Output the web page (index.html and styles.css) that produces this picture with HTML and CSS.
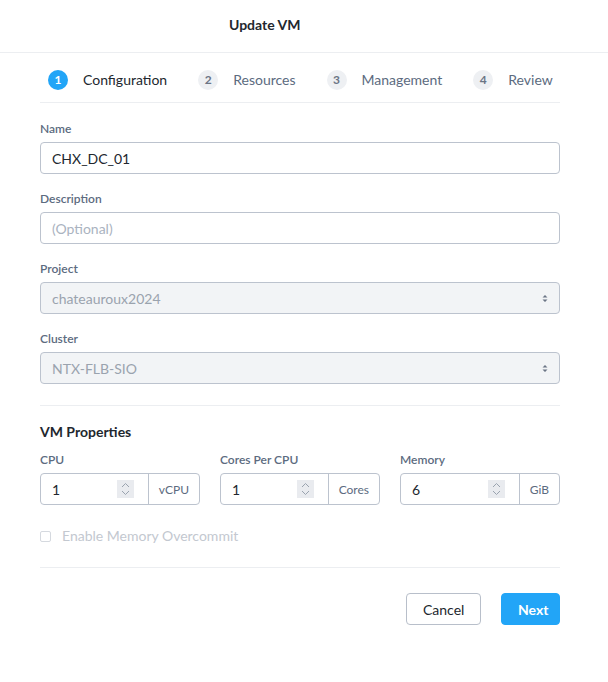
FILE: index.html
```html
<!DOCTYPE html>
<html>
<head>
<meta charset="utf-8">
<link rel="stylesheet" href="styles.css">
</head>
<body>
<div class="modal">
  <div class="header"><span class="title">Update VM</span></div>
  <div class="content">
    <div class="steps">
      <div class="step active"><span class="num">1</span><span class="slabel">Configuration</span></div>
      <div class="step"><span class="num">2</span><span class="slabel">Resources</span></div>
      <div class="step"><span class="num">3</span><span class="slabel">Management</span></div>
      <div class="step"><span class="num">4</span><span class="slabel">Review</span></div>
    </div>
    <div class="form">
      <div class="field">
        <div class="label">Name</div>
        <div class="input"><span class="val">CHX_DC_01</span></div>
      </div>
      <div class="field">
        <div class="label">Description</div>
        <div class="input"><span class="ph">(Optional)</span></div>
      </div>
      <div class="field">
        <div class="label">Project</div>
        <div class="input select"><span class="dis">chateauroux2024</span>
          <svg class="caret" width="6" height="9" viewBox="0 0 6 9"><path d="M0.5 3.5L3 1L5.5 3.5Z M0.5 5.5L3 8L5.5 5.5Z" fill="#6b7585"/></svg>
        </div>
      </div>
      <div class="field">
        <div class="label">Cluster</div>
        <div class="input select"><span class="dis">NTX-FLB-SIO</span>
          <svg class="caret" width="6" height="9" viewBox="0 0 6 9"><path d="M0.5 3.5L3 1L5.5 3.5Z M0.5 5.5L3 8L5.5 5.5Z" fill="#6b7585"/></svg>
        </div>
      </div>
    </div>
    <div class="section">
      <div class="stitle">VM Properties</div>
      <div class="grid">
        <div class="col">
          <div class="label">CPU</div>
          <div class="group">
            <div class="num-in"><span class="val">1</span>
              <span class="spin"><svg width="9" height="16" viewBox="0 0 9 16"><path d="M1 6L4.5 2.5L8 6M1 10L4.5 13.5L8 10" fill="none" stroke="#9aa3af" stroke-width="1"/></svg></span>
            </div>
            <div class="addon">vCPU</div>
          </div>
        </div>
        <div class="col">
          <div class="label">Cores Per CPU</div>
          <div class="group">
            <div class="num-in"><span class="val">1</span>
              <span class="spin"><svg width="9" height="16" viewBox="0 0 9 16"><path d="M1 6L4.5 2.5L8 6M1 10L4.5 13.5L8 10" fill="none" stroke="#9aa3af" stroke-width="1"/></svg></span>
            </div>
            <div class="addon">Cores</div>
          </div>
        </div>
        <div class="col">
          <div class="label">Memory</div>
          <div class="group">
            <div class="num-in"><span class="val">6</span>
              <span class="spin"><svg width="9" height="16" viewBox="0 0 9 16"><path d="M1 6L4.5 2.5L8 6M1 10L4.5 13.5L8 10" fill="none" stroke="#9aa3af" stroke-width="1"/></svg></span>
            </div>
            <div class="addon">GiB</div>
          </div>
        </div>
      </div>
      <div class="check"><span class="box"></span><span>Enable Memory Overcommit</span></div>
    </div>
    <div class="footer">
      <button class="btn cancel">Cancel</button>
      <button class="btn next">Next</button>
    </div>
  </div>
</div>
</body>
</html>
```
FILE: styles.css
```css
* { box-sizing: border-box; }
body {
  margin: 0;
  background: #fff;
  font-family: "Lato", "Open Sans", sans-serif;
  color: #22272e;
}
.modal { width: 608px; height: 682px; }
.header {
  height: 53px;
  border-bottom: 1px solid #eceef1;
  padding-left: 229px;
  display: flex;
  align-items: center;
}
.title { font-size: 14px; font-weight: 700; color: #22272e; margin-top: -4px; }
.content { padding: 0 48px 0 40px; }
.steps {
  height: 50px;
  border-bottom: 1px solid #eceef1;
  display: flex;
  align-items: center;
  gap: 31px;
  padding-left: 8px;
  padding-top: 4px;
}
.step { display: flex; align-items: center; gap: 15px; }
.num {
  width: 20px; height: 20px; border-radius: 50%;
  background: #eef0f3; color: #6b7585;
  font-size: 12px; font-weight: 700;
  display: flex; align-items: center; justify-content: center;
}
.slabel { font-size: 14px; color: #5c6b80; }
.step.active .num { background: #22a5f7; color: #fff; }
.step.active .slabel { color: #22272e; }
.form { padding-top: 18px; padding-bottom: 21px; border-bottom: 1px solid #eceef1; }
.field + .field { margin-top: 17px; }
.label { font-size: 12px; font-weight: 600; color: #5c6b80; line-height: 16px; margin-bottom: 5px; }
.input {
  height: 32px;
  border: 1px solid #bcc3ce;
  border-radius: 4px;
  padding: 0 11px;
  display: flex; align-items: center;
  font-size: 14px;
}
.val { color: #22272e; }
.ph { color: #aab3bf; }
.dis { color: #9aa3ae; }
.select { background: #f2f4f6; justify-content: space-between; }
.section { padding-top: 17px; padding-bottom: 22px; border-bottom: 1px solid #eceef1; }
.stitle { font-size: 14px; font-weight: 700; line-height: 18px; margin-bottom: 11px; }
.grid { display: grid; grid-template-columns: repeat(3, 160px); gap: 20px; }
.group {
  height: 32px; display: flex;
  border: 1px solid #bcc3ce; border-radius: 4px;
}
.num-in {
  flex: 1; display: flex; align-items: center; justify-content: space-between;
  padding: 0 14px 0 11px; font-size: 14px;
}
.spin {
  width: 17px; height: 18px; background: #e9ebef;
  display: flex; align-items: center; justify-content: center;
}
.addon {
  border-left: 1px solid #bcc3ce;
  padding: 0 10px;
  display: flex; align-items: center;
  font-size: 12px; color: #5c6b80;
}
.check {
  margin-top: 22px; display: flex; align-items: center; gap: 11px;
  font-size: 14px; color: #c3c8d0; line-height: 18px;
}
.box { width: 11px; height: 11px; border: 1px solid #d5d9df; border-radius: 2px; }
.footer { display: flex; justify-content: flex-end; gap: 20px; padding-top: 25px; }
.btn {
  height: 32px; border-radius: 4px; font-family: inherit; font-size: 14px;
  padding: 0 16px;
}
.cancel { background: #fff; border: 1px solid #b8bfca; color: #22272e; width: 75px; }
.next { background: #22a5f7; border: 1px solid #22a5f7; color: #fff; font-weight: 700; width: 59px; }
```
